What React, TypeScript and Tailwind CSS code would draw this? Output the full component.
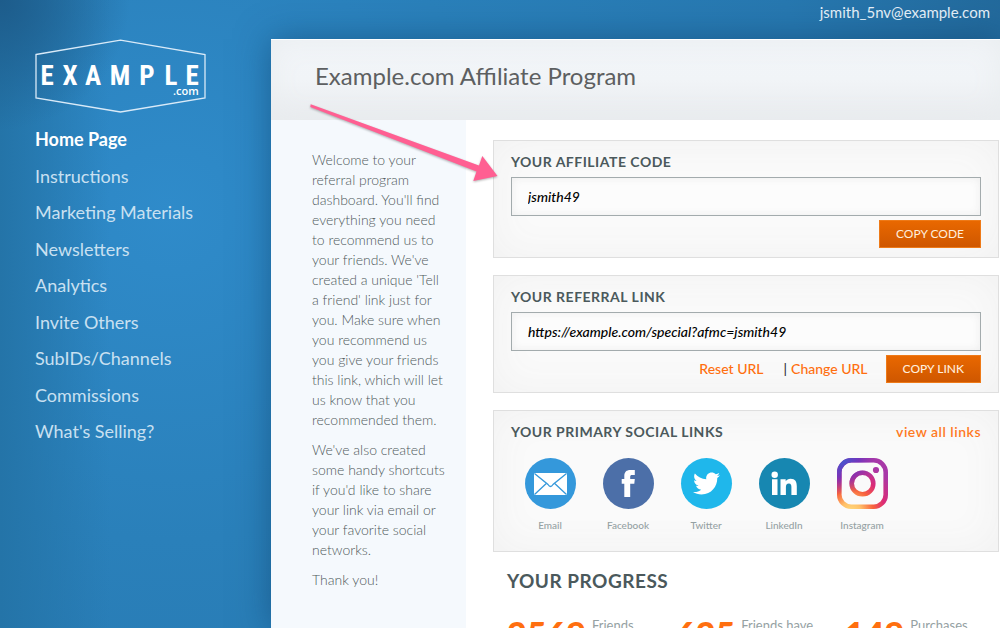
import { FaTwitter } from "react-icons/fa";
import type { ReactNode } from "react";

const navItems = [
  "Home Page",
  "Instructions",
  "Marketing Materials",
  "Newsletters",
  "Analytics",
  "Invite Others",
  "SubIDs/Channels",
  "Commissions",
  "What's Selling?",
];

function Logo() {
  return (
    <svg viewBox="0 0 172 74" className="block h-[74px] w-[172px]" role="img" aria-label="Example.com">
      <path d="M1 15.5 85.5 1.2 170 15.5V59L85.5 73 1 59Z" fill="none" stroke="#d9eaf8" strokeWidth="1.3" />
      <g fill="#fff">
        <text
          x="12 35 58 85 112 136 157"
          y="45.5"
          textAnchor="middle"
          fontSize="27"
          fontWeight="700"
          fontFamily="'Roboto Condensed', Roboto, sans-serif"
        >
          EXAMPLE
        </text>
        <text x="138" y="55.5" fontSize="11" fontWeight="600" fontFamily="'Open Sans', sans-serif">
          .com
        </text>
      </g>
    </svg>
  );
}

function Card({ title, action, children }: { title: ReactNode; action?: ReactNode; children: ReactNode }) {
  return (
    <section className="border border-[#dfdfdf] bg-[#fafafa] px-[17px] pt-[10px] pb-[9px] shadow-[inset_0_0_40px_#f1f1f1]">
      <div className="flex h-[22px] items-center justify-between">
        <h2 className="text-sm font-bold tracking-[0.5px] text-[#4b595c]">{title}</h2>
        {action}
      </div>
      {children}
    </section>
  );
}

function CodeField({ id, value }: { id: string; value: string }) {
  return (
    <input
      id={id}
      readOnly
      defaultValue={value}
      className="mt-1 block h-[39px] w-full border border-[#a3abad] bg-[#fcfcfc] px-4 text-sm font-medium text-black italic shadow-[inset_0_0_8px_#ededed] outline-none"
    />
  );
}

function CopyButton({ children }: { children: ReactNode }) {
  return (
    <button
      type="button"
      className="h-7 border border-[#ee7a18] bg-linear-to-b from-[#e96800] to-[#cf5700] px-4 text-xs text-[#ffeedd]"
    >
      {children}
    </button>
  );
}

function EmailIcon() {
  return (
    <svg viewBox="0 0 51 51" className="size-[51px]" aria-hidden="true">
      <circle cx="25.5" cy="25.5" r="25.5" fill="#3498db" />
      <rect x="9" y="15" width="33" height="22" rx="1" fill="#fff" />
      <path
        d="M9.5 15.5 23 26.5Q25.5 30.5 28 26.5L41.5 15.5M9.5 36.5 21 25.8M41.5 36.5 30 25.8"
        fill="none"
        stroke="#3498db"
        strokeWidth="1.3"
      />
    </svg>
  );
}

function FacebookIcon() {
  return (
    <svg viewBox="0 0 51 51" className="size-[51px]" aria-hidden="true">
      <circle cx="25.5" cy="25.5" r="25.5" fill="#4c6fa8" />
      <path
        d="M21.3 39V25.8H18.7V21H21.3V18.2C21.3 14 23.4 12 27.4 12H31.8V17.1H29C27.7 17.1 27.2 17.7 27.2 18.9V21H31.8L31.3 25.8H27.2V39Z"
        fill="#fff"
      />
    </svg>
  );
}

function LinkedInIcon() {
  return (
    <svg viewBox="0 0 51 51" className="size-[51px]" aria-hidden="true">
      <circle cx="25.5" cy="25.5" r="25.5" fill="#1787b1" />
      <circle cx="15.7" cy="16.8" r="3.2" fill="#fff" />
      <path
        d="M13 21.2H18.5V37H13ZM21.5 21.2H26.7V23.3C27.7 21.7 29.4 20.8 31.5 20.8C36.4 20.8 37.8 23.9 37.8 28.3V37H32.4V29.3C32.4 27.3 32.1 25.5 29.9 25.5C27.6 25.5 26.9 27.2 26.9 29.3V37H21.5Z"
        fill="#fff"
      />
    </svg>
  );
}

function InstagramIcon() {
  return (
    <svg viewBox="0 0 51 51" className="size-[51px]" aria-hidden="true">
      <defs>
        <radialGradient id="ig-warm" cx="14" cy="54" r="50" gradientUnits="userSpaceOnUse">
          <stop offset="0" stopColor="#ffdc7d" />
          <stop offset="0.2" stopColor="#ffc169" />
          <stop offset="0.45" stopColor="#f8633c" />
          <stop offset="0.68" stopColor="#dc2b76" />
          <stop offset="1" stopColor="#a838a8" />
        </radialGradient>
        <radialGradient id="ig-cool" cx="4" cy="1" r="36" gradientUnits="userSpaceOnUse">
          <stop offset="0" stopColor="#3f5bd0" />
          <stop offset="0.5" stopColor="#6b35c0" stopOpacity="0.85" />
          <stop offset="1" stopColor="#8a34b8" stopOpacity="0" />
        </radialGradient>
      </defs>
      {["url(#ig-warm)", "url(#ig-cool)"].map((paint) => (
        <g key={paint}>
          <rect x="2.3" y="2.3" width="46.4" height="46.4" rx="12" fill="none" stroke={paint} strokeWidth="4.6" />
          <circle cx="25.5" cy="25.5" r="10.8" fill="none" stroke={paint} strokeWidth="4.6" />
          <circle cx="39" cy="12" r="3.1" fill={paint} />
        </g>
      ))}
    </svg>
  );
}

const socials: { name: string; icon: ReactNode }[] = [
  { name: "Email", icon: <EmailIcon /> },
  { name: "Facebook", icon: <FacebookIcon /> },
  {
    name: "Twitter",
    icon: (
      <span className="flex size-[51px] items-center justify-center rounded-full bg-[#1fb7eb]">
        <FaTwitter className="size-[27px] text-white" />
      </span>
    ),
  },
  { name: "LinkedIn", icon: <LinkedInIcon /> },
  { name: "Instagram", icon: <InstagramIcon /> },
];

const stats = [
  { value: "2569", label: "Friends Referred" },
  { value: "625", label: "Friends have Joined" },
  { value: "149", label: "Purchases Made" },
];

function Arrow() {
  return (
    <svg
      viewBox="0 0 192 84"
      className="pointer-events-none absolute top-[102px] left-[308px] h-[84px] w-[192px] drop-shadow-[0_1px_1px_rgba(0,0,0,0.3)]"
      aria-hidden="true"
    >
      <path d="M2.7 2.2 171 63.5 174.3 54 189.5 74 165.3 79 168.5 69.5 2.3 5Z" fill="#ff5f92" />
    </svg>
  );
}

export default function App() {
  return (
    <div className="relative flex h-screen flex-col overflow-hidden bg-[#2a80b9] bg-[radial-gradient(circle_at_0_0,#1d5c8b_0,transparent_130px),linear-gradient(to_right,#2474a8_0,transparent_110px),radial-gradient(circle_at_170px_210px,#2f8bca_0,#2a80ba_330px,#2778b0_650px,#226798_900px)] font-['Lato',sans-serif]">
      <header className="flex h-[39px] shrink-0 justify-end pt-[2px] pr-[10px]">
        <a href="#account" className="text-[15px] leading-5 text-[#e8f2fa]">
          jsmith_5nv@example.com
        </a>
      </header>
      <div className="flex min-h-0 flex-1">
        <aside className="w-[271px] shrink-0 pl-[35px]">
          <Logo />
          <nav className="mt-[14px]" aria-label="Main">
            <ul className="flex h-[317px] flex-col justify-between">
              {navItems.map((item, i) => (
                <li key={item} className="leading-6">
                  <a href="#" className={i === 0 ? "text-lg leading-6 font-bold text-white" : "text-lg leading-6 text-[#c9e0f1]"}>
                    {item}
                  </a>
                </li>
              ))}
            </ul>
          </nav>
        </aside>
        <main className="flex min-w-0 flex-1 flex-col bg-white shadow-[0_0_32px_rgba(12,60,100,0.5)]">
          <div className="flex h-[81px] shrink-0 items-center border-t border-white bg-linear-to-b from-[#f2f5f9] via-[#f1f4f7] to-[#e9ebee] pb-2 pl-[44px] shadow-[inset_0_0_30px_#e9edef]">
            <h1 className="text-2xl text-[#5d5f61]">Example.com Affiliate Program</h1>
          </div>
          <div className="flex min-h-0 flex-1">
            <div className="w-[195px] shrink-0 space-y-[10px] bg-[#f5f9fd] pt-[30px] pr-5 pl-[41px] text-sm leading-5 font-light text-[#505a5c]">
              <p>
                Welcome to your referral program dashboard. You'll find everything you need to recommend us to your
                friends. We've created a unique 'Tell a friend' link just for you. Make sure when you recommend us you
                give your friends this link, which will let us know that you recommended them.
              </p>
              <p>
                We've also created some handy shortcuts if you'd like to share your link via email or your favorite
                social networks.
              </p>
              <p>Thank you!</p>
            </div>
            <div className="flex min-w-0 flex-1 flex-col gap-[17px] pt-5 pr-px pl-[27px]">
              <Card title={<label htmlFor="code">YOUR AFFILIATE CODE</label>}>
                <CodeField id="code" value="jsmith49" />
                <div className="mt-1 flex justify-end">
                  <CopyButton>COPY CODE</CopyButton>
                </div>
              </Card>
              <Card title={<label htmlFor="link">YOUR REFERRAL LINK</label>}>
                <CodeField id="link" value="https://example.com/special?afmc=jsmith49" />
                <div className="mt-1 flex items-center justify-end text-sm font-medium text-[#ff6f0f]">
                  <a href="#reset">Reset URL</a>
                  <span className="mr-1 ml-5 text-[#333]">|</span>
                  <a href="#change" className="mr-[18px]">
                    Change URL
                  </a>
                  <CopyButton>COPY LINK</CopyButton>
                </div>
              </Card>
              <Card
                title="YOUR PRIMARY SOCIAL LINKS"
                action={
                  <a href="#links" className="text-sm font-semibold tracking-[0.5px] text-[#ff7a1f]">
                    view all links
                  </a>
                }
              >
                <ul className="mt-[15px] mb-[9px] flex">
                  {socials.map((s) => (
                    <li key={s.name} className="w-[78px]">
                      <a href="#share" className="flex flex-col items-center gap-2 text-[10px] leading-4 font-medium text-[#95a1a3]">
                        {s.icon}
                        {s.name}
                      </a>
                    </li>
                  ))}
                </ul>
              </Card>
              <section className="pl-[14px]">
                <h2 className="text-[19px] leading-6 font-bold tracking-[0.5px] text-[#4b595c]">YOUR PROGRESS</h2>
                <ul className="mt-[21px] flex">
                  {stats.map((s) => (
                    <li key={s.value} className="flex w-[169px] shrink-0 gap-[6px]">
                      <strong className="text-[34px] leading-10 font-black text-[#ff6f0f]">{s.value}</strong>
                      <span className="w-20 pt-px text-[13px] leading-5 text-[#95a1a3]">{s.label}</span>
                    </li>
                  ))}
                </ul>
              </section>
            </div>
          </div>
        </main>
      </div>
      <Arrow />
    </div>
  );
}
